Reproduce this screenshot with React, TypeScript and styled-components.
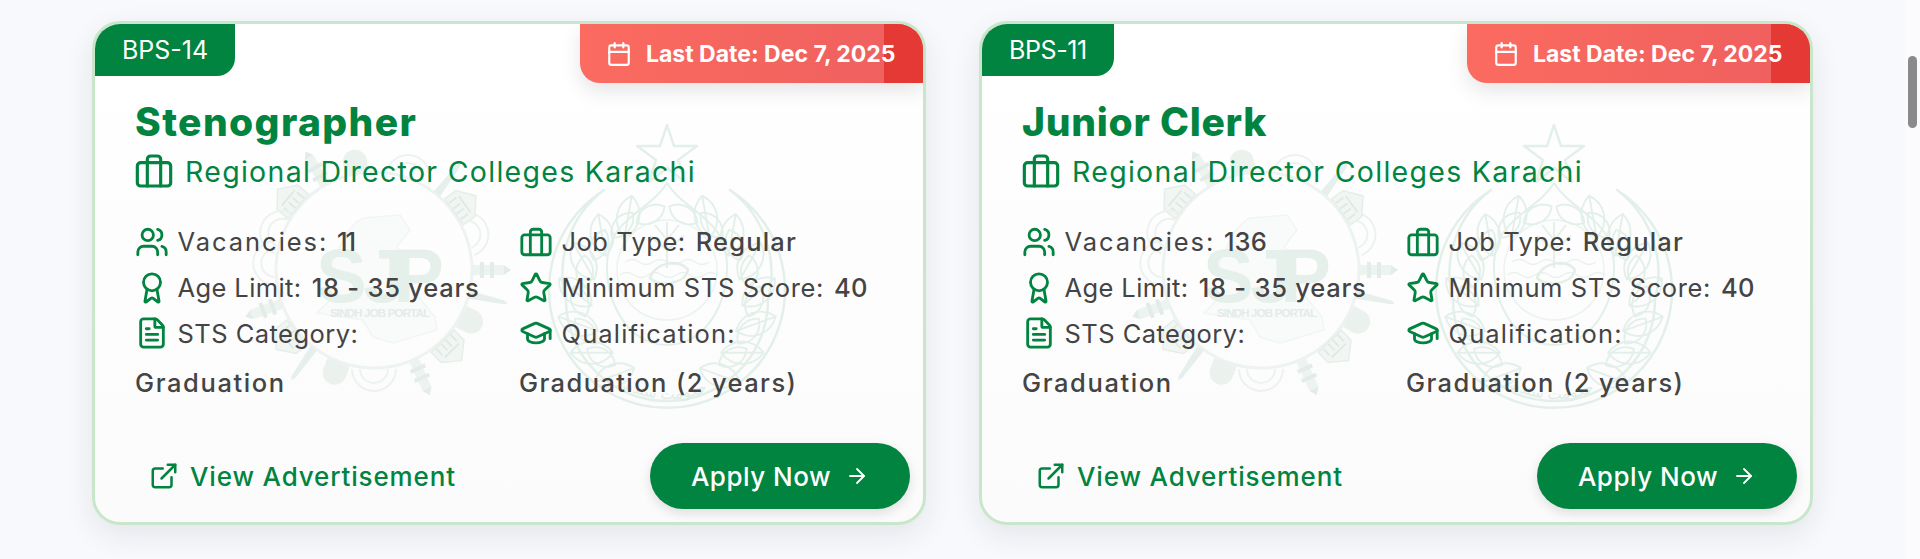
import React from "react";
import styled, { createGlobalStyle } from "styled-components";
import { Users, Award, FileText, Star, GraduationCap, Calendar, ExternalLink, ArrowRight } from "lucide-react";

const Global = createGlobalStyle`
  html, body { margin: 0; height: 559px; overflow: hidden; background: #f8f9fc; }
  * { box-sizing: border-box; }
`;

const Page = styled.div`
  display: flex;
  height: 559px;
  font-family: Inter, "Liberation Sans", sans-serif;
`;
const Cards = styled.main`
  flex: 1;
  display: flex;
  gap: 53px;
  padding: 21px 0 0 92px;
  align-items: flex-start;
`;
const ScrollTrack = styled.aside`
  width: 15px;
  background: #fbfbfd;
  padding: 56px 3px 0 3px;
`;
const ScrollThumb = styled.div`
  width: 9px;
  height: 72px;
  border-radius: 5px;
  background: #8a8a8a;
`;
const Card = styled.article`
  position: relative;
  width: 834px;
  height: 504px;
  border: 3px solid #c8e6c9;
  border-radius: 28px;
  overflow: hidden;
  background: linear-gradient(180deg, #ffffff 0%, #fbfbfc 100%);
  box-shadow: 0 10px 30px rgba(20, 30, 60, 0.09);
  display: flex;
  flex-direction: column;
  padding: 74px 13px 13px 41px;
`;
const Mark = styled.svg`
  position: absolute;
  left: 0;
  top: 0;
  width: 828px;
  height: 498px;
`;
const Grade = styled.div<{ $ls: number }>`
  position: absolute;
  left: 0;
  top: 0;
  height: 52px;
  display: flex;
  align-items: center;
  padding: 0 27px;
  background: #00843f;
  color: #fff;
  font-size: 25px;
  letter-spacing: ${(p) => p.$ls}px;
  border-bottom-right-radius: 18px;
`;
const Deadline = styled.div`
  position: absolute;
  right: 0;
  top: 0;
  width: 343px;
  height: 59px;
  display: flex;
  align-items: center;
  gap: 14px;
  padding-left: 26px;
  background: linear-gradient(90deg, #fb6b60, #ee5f5f);
  color: #fff;
  font-size: 23px;
  font-weight: 700;
  white-space: nowrap;
  border-bottom-left-radius: 20px;
  box-shadow: 0 8px 20px rgba(0, 0, 0, 0.1);
  &::after {
    content: "";
    position: absolute;
    right: 0;
    top: 0;
    width: 39px;
    height: 100%;
    background: #e53935;
  }
  & > svg {
    position: relative;
    z-index: 1;
    flex: none;
  }
`;
const DeadlineText = styled.span`
  position: relative;
  z-index: 1;
`;
const Title = styled.h2<{ $ls: number }>`
  position: relative;
  margin: 0 0 0 -1px;
  height: 48px;
  line-height: 48px;
  font-size: 39px;
  font-weight: 800;
  color: #00843f;
  letter-spacing: ${(p) => p.$ls}px;
`;
const Office = styled.div`
  position: relative;
  height: 40px;
  margin-top: 5px;
  display: flex;
  align-items: center;
  gap: 12px;
  color: #00843f;
  font-size: 28.5px;
  white-space: nowrap;
  letter-spacing: 1.3px;
`;
const OfficeIcon = styled.svg`
  width: 40px;
  height: 40px;
  margin-left: -2px;
  margin-right: -1px;
  fill: none;
  stroke: #00843f;
  stroke-width: 1.9;
  stroke-linecap: round;
  stroke-linejoin: round;
  flex: none;
`;
const Facts = styled.div`
  position: relative;
  margin-top: 28px;
  display: grid;
  grid-template-columns: 384px 1fr;
  grid-auto-rows: 45.7px;
`;
const Fact = styled.div`
  display: flex;
  align-items: center;
  color: #444;
  font-size: 25.5px;
  white-space: nowrap;
  & > svg {
    flex: none;
    width: 34px;
    height: 34px;
    margin: 0 9px 0 -1.5px;
    color: #00843f;
  }
`;
const Label = styled.span<{ $ls: number }>`
  letter-spacing: ${(p) => p.$ls}px;
  margin-right: ${(p) => 10.5 - p.$ls}px;
`;
const RowIcon = styled.svg`
  fill: none;
  stroke: currentColor;
  stroke-width: 2;
  stroke-linecap: round;
  stroke-linejoin: round;
`;
const FactValue = styled.b<{ $ls: number }>`
  font-weight: 500;
  letter-spacing: ${(p) => p.$ls}px;
`;
const Wide = styled.div<{ $ls: number }>`
  height: 52px;
  margin-left: -1px;
  display: flex;
  align-items: center;
  color: #444;
  font-size: 25.5px;
  font-weight: 500;
  white-space: nowrap;
  letter-spacing: ${(p) => p.$ls}px;
`;
const Footer = styled.footer`
  position: relative;
  margin-top: auto;
  display: flex;
  align-items: center;
  justify-content: space-between;
`;
const AdLink = styled.a`
  display: flex;
  align-items: center;
  gap: 11px;
  margin-left: 13px;
  color: #00843f;
  font-size: 26px;
  font-weight: 500;
  letter-spacing: 0.85px;
`;
const Apply = styled.button`
  width: 260px;
  height: 66px;
  border: 0;
  border-radius: 33px;
  background: #00843f;
  color: #fff;
  font: 500 26px Inter, "Liberation Sans", sans-serif;
  letter-spacing: 0.5px;
  display: flex;
  align-items: center;
  justify-content: center;
  gap: 14px;
  box-shadow: 0 4px 12px rgba(0, 0, 0, 0.12);
`;

const towers: [number, string][] = [
  [-30, "m"], [-50, "b"], [-68, "a"], [-86, "a"], [-110, "m"], [-129, "b"], [-143, "s"], [-159, "d"],
  [180, "a"], [156, "m"], [136, "b"], [118, "d"], [104, "s"], [90, "m"], [69, "a"], [54, "b"], [39, "s"], [20, "a"], [-10, "d"],
];
const Monument = ({ kind }: { kind: string }) => {
  const y = 170;
  if (kind === "m")
    return (
      <g>
        <rect x={369} y={y - 30} width={10} height={32} fill="#edf4f0" />
        <rect x={366} y={y - 20} width={16} height={4} fill="#e3ece8" />
        <rect x={366} y={y - 10} width={16} height={4} fill="#e3ece8" />
        <path d={`M369 ${y - 30}L374 ${y - 37}L379 ${y - 30}Z`} fill="#e3ece8" />
      </g>
    );
  if (kind === "b")
    return (
      <g>
        <path d={`M358 ${y + 1}V${y - 13}L374 ${y - 26}L390 ${y - 13}V${y + 1}Z`} fill="#f1f6f3" stroke="#e6eeea" strokeWidth={1.5} />
        <path d={`M364 ${y}v-9m7 9v-9m6 9v-9m7 9v-9M364 ${y - 12}h20`} stroke="#dfe9e4" strokeWidth={1.8} fill="none" />
      </g>
    );
  if (kind === "s") return <path d={`M371 ${y + 1}L372 ${y - 34}L374 ${y - 38}L376 ${y - 34}L379 ${y + 1}Z`} fill="#e6efeb" />;
  if (kind === "d")
    return <path d={`M362 ${y + 1}V${y - 10}A12 12 0 0 1 386 ${y - 10}V${y + 1}Z`} fill="#ebf2ee" />;
  return (
    <path
      d={`M352 ${y + 1}A22 22 0 0 1 396 ${y + 1}M360 ${y + 1}A14 14 0 0 1 388 ${y + 1}`}
      fill="none"
      stroke="#ecf3ef"
      strokeWidth={2}
    />
  );
};

const leaves = [0, 1, 2, 3, 4, 5, 6];
const Leaf = ({ a, r }: { a: number; r: number }) => (
  <g transform={`rotate(${a} 667 300) translate(667 ${300 - r}) scale(1.25)`}>
    <path d="M0 -17C12 -8 12 8 0 17C-12 8 -12 -8 0 -17Z M0 -17V17" transform="rotate(35)" />
    <path d="M0 -13C9 -6 9 6 0 13C-9 6 -9 -6 0 -13Z" transform="translate(17 6) rotate(85)" />
  </g>
);

const Watermark = () => (
  <Mark viewBox="95 24 828 498" aria-hidden="true">
    <path
      d="M343 240Q350 225 363 218L400 215L410 230L397 247L405 270L413 290L435 317L437 330L393 343L373 337L363 320L317 313L337 293L330 267Z"
      fill="#f9fbfa"
      stroke="#f1f5f3"
      strokeWidth={1.5}
    />
    <circle cx={374} cy={270} r={98} fill="none" stroke="#edf3f0" strokeWidth={3} />
    {towers.map(([a, k]) => (
      <g key={a} transform={`rotate(${a} 374 270)`}>
        <Monument kind={k} />
      </g>
    ))}
    <text x={316} y={302} fontFamily="Liberation Sans" fontWeight={700} fontSize={76} fill="#e5f0eb" textLength={128}>
      S JP
    </text>
    <text x={330} y={317} fontFamily="Liberation Sans" fontWeight={700} fontSize={11.5} fill="#e4ebe8" textLength={100}>
      SINDH JOB PORTAL
    </text>

    <g fill="none" stroke="#e3f0e9" strokeWidth={2.5} strokeLinejoin="round">
      <path d="M667 125L674 146L697 146L678 160L685 182L667 168L649 182L656 160L637 146L660 146Z" />
      <path d="M604 190A118 118 0 1 0 730 190A104 104 0 0 1 768 300A101 101 0 1 1 566 300A104 104 0 0 1 604 190Z" />
      <path d="M667 183C680 205 710 215 722 240C738 280 715 345 667 345C619 345 596 280 612 240C624 215 654 205 667 183Z" strokeWidth={2} />
      <circle cx={667} cy={270} r={50} strokeWidth={1.5} stroke="#ebf3ee" />
      <path d="M625 262q7 -5 14 0t14 0t14 0t14 0t14 0t14 0M620 275q7 -5 14 0t14 0t14 0t14 0t14 0t14 0t14 0" stroke="#e8f2ed" strokeWidth={1.5} />
      <path d="M667 268V222M667 240L655 225M667 240L679 225M667 250L650 236M667 250L684 236" stroke="#e5f0ea" strokeWidth={2} />
      <path d="M650 278C655 262 680 258 688 270C685 284 660 288 650 278Z" stroke="#e3eee8" />
      <g strokeWidth={1.5}>
        {leaves.map((i) => (
          <g key={i}>
            <Leaf a={-25 - i * 20} r={92} />
            <g transform="translate(1334 0) scale(-1 1)">
              <Leaf a={-25 - i * 20} r={92} />
            </g>
          </g>
        ))}
      </g>
      <path id="sealArc" d="M590 360A98 98 0 0 0 750 355" stroke="none" />
    </g>
    <text fontFamily="DejaVu Sans" fontSize={15} fill="#dfece6" direction="rtl">
      <textPath href="#sealArc" startOffset="70%">حکومت سندھ</textPath>
    </text>
  </Mark>
);

const Briefcase = () => (
  <>
    <rect width="20" height="14" x="2" y="7" rx="2" />
    <path d="M16 21V5a2 2 0 0 0-2-2h-4a2 2 0 0 0-2 2v16" />
  </>
);

type JobProps = { grade: string; gradeLs: number; title: string; titleLs: number; vacancies: string; vacLs: number };

const JobCard = ({ grade, gradeLs, title, titleLs, vacancies, vacLs }: JobProps) => (
  <Card>
    <Watermark />
    <Grade $ls={gradeLs}>{grade}</Grade>
    <Deadline>
      <Calendar size={26} strokeWidth={2} />
      <DeadlineText>Last Date: Dec 7, 2025</DeadlineText>
    </Deadline>
    <Title $ls={titleLs}>{title}</Title>
    <Office>
      <OfficeIcon viewBox="0 0 24 24">
        <Briefcase />
      </OfficeIcon>
      Regional Director Colleges Karachi
    </Office>
    <Facts>
      <Fact>
        <Users />
        <Label $ls={1.96}>Vacancies:</Label>
        <FactValue $ls={vacLs}>{vacancies}</FactValue>
      </Fact>
      <Fact>
        <RowIcon viewBox="0 0 24 24">
          <Briefcase />
        </RowIcon>
        <Label $ls={0.5}>Job Type:</Label>
        <FactValue $ls={1.2}>Regular</FactValue>
      </Fact>
      <Fact>
        <Award />
        <Label $ls={0.4}>Age Limit:</Label>
        <FactValue $ls={0.75}>18 - 35 years</FactValue>
      </Fact>
      <Fact>
        <Star />
        <Label $ls={0.62}>Minimum STS Score:</Label>
        <FactValue $ls={0.5}>40</FactValue>
      </Fact>
      <Fact>
        <FileText />
        <Label $ls={0.46}>STS Category:</Label>
      </Fact>
      <Fact>
        <GraduationCap />
        <Label $ls={1.14}>Qualification:</Label>
      </Fact>
      <Wide $ls={1.6}>Graduation</Wide>
      <Wide $ls={1.4}>Graduation (2 years)</Wide>
    </Facts>
    <Footer>
      <AdLink>
        <ExternalLink size={30} />
        View Advertisement
      </AdLink>
      <Apply>
        Apply Now
        <ArrowRight size={24} strokeWidth={1.8} />
      </Apply>
    </Footer>
  </Card>
);

export default function App() {
  return (
    <Page>
      <Global />
      <Cards>
        <JobCard grade="BPS-14" gradeLs={0} title="Stenographer" titleLs={1.4} vacancies="11" vacLs={-2} />
        <JobCard grade="BPS-11" gradeLs={-0.4} title="Junior Clerk" titleLs={0.75} vacancies="136" vacLs={0.1} />
      </Cards>
      <ScrollTrack>
        <ScrollThumb />
      </ScrollTrack>
    </Page>
  );
}
